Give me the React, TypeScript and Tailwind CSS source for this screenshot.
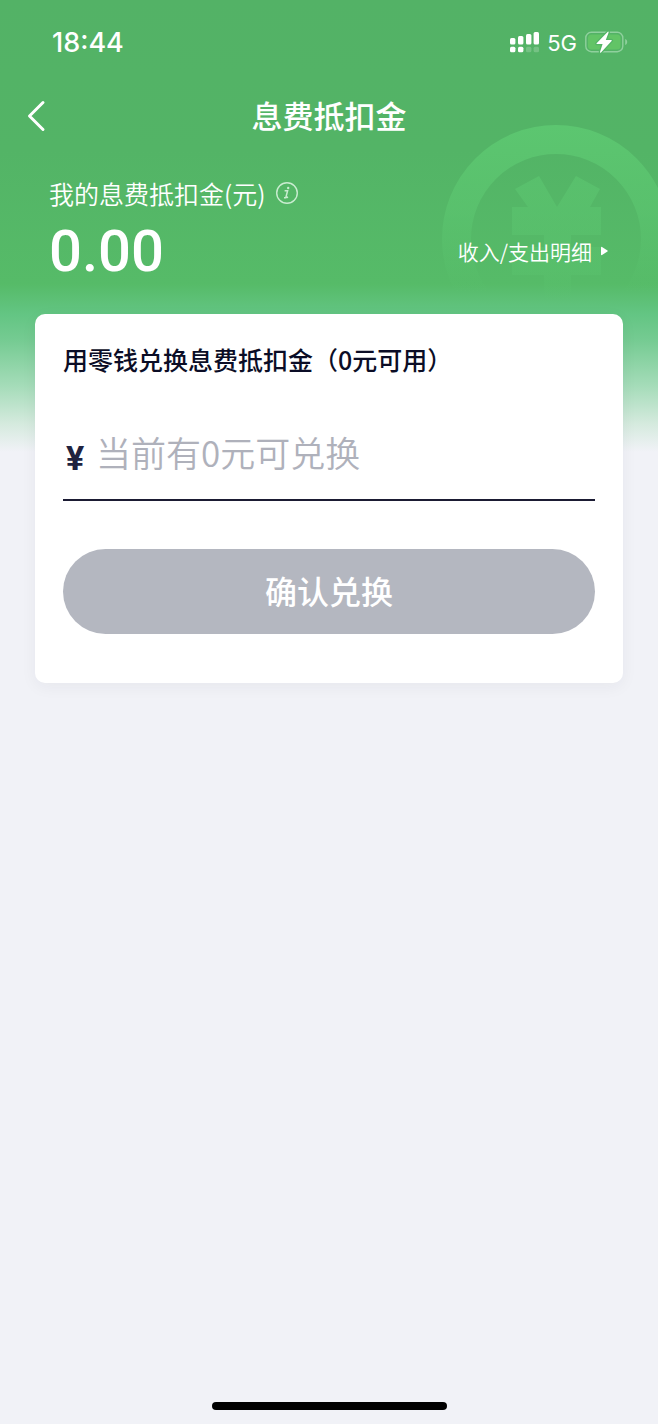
import * as React from 'react';

function SignalIcon() {
  return (
    <svg className="w-[29px] h-[22px]" viewBox="0 0 29 22" fill="white" aria-hidden="true">
      <rect x="0" y="7" width="5.400" height="6.400" rx="1.500" />
      <rect x="8" y="5" width="5.400" height="8.400" rx="1.500" />
      <rect x="16" y="3" width="5.400" height="10.400" rx="1.500" />
      <rect x="23.600" y="1" width="5.400" height="12.400" rx="1.500" />
      <rect x="0" y="15.800" width="5.400" height="5.400" rx="1.500" />
      <rect x="8" y="15.800" width="5.400" height="5.400" rx="1.500" />
      <rect x="16" y="15.800" width="5.400" height="5.400" rx="1.500" opacity="0.2" />
      <rect x="23.600" y="15.800" width="5.400" height="5.400" rx="1.500" opacity="0.2" />
    </svg>
  );
}

function BatteryIcon() {
  return (
    <svg className="w-[43px] h-[22px]" viewBox="0 0 43 22" fill="none" aria-hidden="true">
      <rect x="0.8" y="1.3" width="37" height="19.4" rx="5.500" stroke="#8fd09d" strokeWidth="1.4" />
      <rect x="3" y="3.500" width="32.5" height="15" rx="3.500" fill="#62c466" />
      <path d="M40.2 8c1.4.5 2 1.600 2 3s-.6 2.500-2 3z" fill="#8fd09d" />
      <path
        d="M22.800 0.800L11.600 12.200Q11 13 12 13H17.600L15 21Q15 22 16 21.400L26.600 10Q27.200 9 26.200 9H20.800L23.600 1.400Q23.600 0.200 22.800 0.800Z"
        fill="white"
        stroke="#53b466"
        strokeWidth="2.500"
        strokeLinejoin="round"
        paintOrder="stroke"
      />
    </svg>
  );
}

function CoinWatermark() {
  return (
    <svg
      className="absolute top-[125px] -right-3 w-[228px] h-[228px] pointer-events-none"
      viewBox="0 0 228 228"
      aria-hidden="true"
    >
      <defs>
        <linearGradient id="coin" gradientUnits="userSpaceOnUse" x1="0" y1="0" x2="0" y2="168">
          <stop offset="0" stopColor="#5cc670" />
          <stop offset="0.5" stopColor="#5cc670" stopOpacity="0.650" />
          <stop offset="1" stopColor="#5cc670" stopOpacity="0" />
        </linearGradient>
        <linearGradient id="yen" gradientUnits="userSpaceOnUse" x1="0" y1="50" x2="0" y2="176">
          <stop offset="0" stopColor="#5cc670" stopOpacity="0.65" />
          <stop offset="0.75" stopColor="#5cc670" stopOpacity="0.35" />
          <stop offset="1" stopColor="#5cc670" stopOpacity="0" />
        </linearGradient>
      </defs>
      <circle cx="114" cy="114" r="99.500" fill="none" stroke="url(#coin)" strokeWidth="29" />
      <path
        d="M73 64L97 51 115 82 134 51 158 64 148 82H159V110H129V122H159V150H129V174H102V150H70V122H102V110H70V82H86Z"
        fill="url(#yen)"
      />
    </svg>
  );
}

function StatusBar() {
  return (
    <div className="flex items-center justify-between h-21 pl-[52px] pr-[30px] font-['Inter',sans-serif]">
      <span className="pt-0.5 text-[27px] leading-8 font-medium">18:44</span>
      <div className="flex items-center gap-2">
        <SignalIcon />
        <span className="pt-0.5 text-[22px] leading-8">5G</span>
        <BatteryIcon />
      </div>
    </div>
  );
}

function ExchangeCard() {
  const [amount, setAmount] = React.useState('');

  return (
    <form
      className="mx-[35px] mt-6 px-7 pt-[27px] pb-[49px] bg-white rounded-[10px] shadow-[0_4px_16px_rgba(30,30,60,0.05)]"
      onSubmit={(e) => e.preventDefault()}
    >
      <label htmlFor="amount" className="block text-[25px] leading-9 font-medium text-[#0b0d26]">
        用零钱兑换息费抵扣金（0元可用）
      </label>
      <div className="flex items-center h-[94px] mt-[30px] border-b-2 border-[#1b1b33]">
        <span className="w-[33px] pl-[3px] pt-2.5 text-[34px] leading-10 font-bold text-[#20233f] font-['Roboto',sans-serif]">¥</span>
        <input
          id="amount"
          type="text"
          inputMode="decimal"
          value={amount}
          onChange={(e) => setAmount(e.target.value)}
          placeholder="当前有0元可兑换"
          className="flex-1 min-w-0 h-14 pb-1 text-[35px] font-[350] text-[#20233f] placeholder:text-[#afb1bb] outline-none"
        />
      </div>
      <button
        type="submit"
        className="block w-full h-[85px] mt-12 pb-1 rounded-full bg-[#b4b7c0] text-[32px] font-medium text-white"
      >
        确认兑换
      </button>
    </form>
  );
}

export default function App() {
  return (
    <div className="relative flex flex-col min-h-screen overflow-hidden bg-[#f1f2f7] bg-[linear-gradient(180deg,#53b266_0px,#53b466_150px,#56bb68_284px,#63c583_314px,#75cb92_340px,#a5dcb9_386px,#d5eade_424px,#f1f2f7_452px)] font-['Noto_Sans_CJK_SC',sans-serif]">
      <CoinWatermark />
      <header className="relative text-white">
        <StatusBar />
        <nav className="grid grid-cols-[1fr_auto_1fr] items-center h-16 px-6">
          <button type="button" aria-label="返回" className="flex w-6 h-10 items-center justify-center">
            <svg className="w-6 h-8" viewBox="0 0 24 32" fill="none" aria-hidden="true">
              <path d="M19 2.500L5.500 16 19 29.500" stroke="white" strokeWidth="3" strokeLinecap="round" strokeLinejoin="round" />
            </svg>
          </button>
          <h1 className="pb-[3px] text-[31px] leading-10 font-medium">息费抵扣金</h1>
        </nav>
        <section className="pl-[49px] pr-[50px] pt-[27px]">
          <div className="flex items-center gap-[9px]">
            <span className="text-[25px] leading-9 font-[350]">我的息费抵扣金(元)</span>
            <button type="button" aria-label="说明" className="w-6 h-6">
              <svg viewBox="0 0 24 24" fill="none" aria-hidden="true">
                <circle cx="12" cy="12" r="10.300" stroke="#c9ecd0" strokeWidth="1.400" />
                <path d="M9.600 9.800h3L11 15.800q-.2 1.400 2 .2M9 16.800h2" stroke="#c9ecd0" strokeWidth="1.500" />
                <circle cx="13.200" cy="7" r="1.200" fill="#c9ecd0" />
              </svg>
            </button>
          </div>
          <div className="flex items-center justify-between h-[79px]">
            <strong className="text-[58px] leading-[74px] font-medium font-['Roboto',sans-serif]">0.00</strong>
            <a href="#detail" className="flex items-center gap-2 text-[21px] leading-8 font-[350]">
              收入/支出明细
              <svg className="w-2 h-2.5" viewBox="0 0 8 10" fill="white" aria-hidden="true">
                <path d="M1 1.500Q1 .5 2 1L7.500 4.500Q8 5 7.500 5.500L2 9Q1 9.500 1 8.500Z" />
              </svg>
            </a>
          </div>
        </section>
      </header>
      <main className="relative">
        <ExchangeCard />
      </main>
      <footer className="mt-auto pb-[14px] flex justify-center">
        <div className="w-[235px] h-2 rounded-full bg-black" />
      </footer>
    </div>
  );
}
